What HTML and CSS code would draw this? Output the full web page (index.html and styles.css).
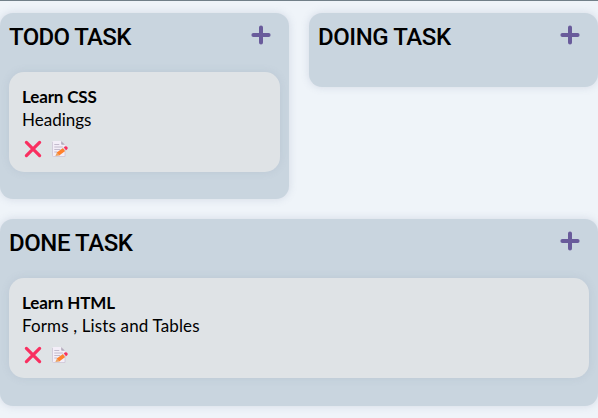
FILE: index.html
```html
<!DOCTYPE html>
<html lang="en">
<head>
<meta charset="utf-8">
<title>Task board</title>
<link rel="stylesheet" href="styles.css">
</head>
<body>
<svg class="defs" aria-hidden="true">
  <symbol id="plus" viewBox="0 0 20 20"><path d="M10 2.400v15.200M2.400 10h15.200" fill="none" stroke="#695b9b" stroke-width="4" stroke-linecap="round"/></symbol>
  <symbol id="cross" viewBox="0 0 18 18"><path d="M2.400 2.400l13.200 13.200M15.600 2.400L2.400 15.600" fill="none" stroke="#f92f60" stroke-width="3.200" stroke-linecap="round"/></symbol>
  <symbol id="memo" viewBox="0 0 18 18">
    <path d="M2.500 1h7.700L14 4.800V16.500H2.500a1 1 0 0 1-1-1V2a1 1 0 0 1 1-1z" fill="#f3eef8"/>
    <path d="M1.500 2v13.500a1 1 0 0 0 1 1H14V8" fill="none" stroke="#cdc4d6" stroke-width=".8"/>
    <path d="M10.200 1L14 4.800h-3a.8.8 0 0 1-.8-.8z" fill="#b4acbc"/>
    <path d="M3.300 4.500h5M3.300 7h8.500M3.300 9.500h6M3.300 12h3" stroke="#bdb4c7" stroke-width=".9"/>
    <path d="M4.300 15.900l1.700-3.500 2.400 3z" fill="#e6a567"/>
    <path d="M5.700 12.500l6.300-4.600 2.200 3-6 4.600z" fill="#ff822d"/>
    <path d="M12 7.900l1-.7 2.200 3-1 .7z" fill="#d3d3d3"/>
    <path d="M12.800 7.300l1-.7a1.800 1.800 0 0 1 2.200 2.900l-1 .8z" fill="#f92f60"/>
  </symbol>
</svg>
<main class="board">
  <section class="column">
    <header class="column-head"><h2 class="todo">TODO TASK</h2><svg class="add"><use href="#plus"/></svg></header>
    <article class="task">
      <h3>Learn CSS</h3>
      <p>Headings</p>
      <div class="actions"><svg><use href="#cross"/></svg><svg><use href="#memo"/></svg></div>
    </article>
  </section>
  <section class="column">
    <header class="column-head"><h2>DOING TASK</h2><svg class="add"><use href="#plus"/></svg></header>
  </section>
  <section class="column wide">
    <header class="column-head"><h2>DONE TASK</h2><svg class="add"><use href="#plus"/></svg></header>
    <article class="task">
      <h3>Learn HTML</h3>
      <p class="long">Forms , Lists and Tables</p>
      <div class="actions"><svg><use href="#cross"/></svg><svg><use href="#memo"/></svg></div>
    </article>
  </section>
</main>
</body>
</html>
```
FILE: styles.css
```css
* { box-sizing: border-box; margin: 0; }
body {
  height: 418px;
  overflow: hidden;
  background: #eff4f9;
  border-top: 1px solid #728089;
  color: #000;
  font-family: Lato, "Open Sans", sans-serif;
}
.defs { position: absolute; width: 0; height: 0; }
.board {
  display: grid;
  grid-template-columns: 1fr 1fr;
  grid-template-rows: 186px 187px;
  gap: 20px;
  align-items: start;
  padding-top: 12px;
}
.column {
  padding: 9px;
  border-radius: 13px;
  background: #c9d5df;
  box-shadow: 0 0 8px rgba(100, 115, 150, .2);
  height: 186px;
}
.column:nth-child(2) { height: 74px; }
.wide { grid-column: 1 / -1; height: 187px; }
.column-head {
  display: flex;
  justify-content: space-between;
  align-items: flex-start;
  height: 50px;
  padding: 3px 9px 0 0;
}
h2 {
  font: 500 24px/24px Roboto, sans-serif;
  letter-spacing: -.42px;
  white-space: nowrap;
}
.todo { letter-spacing: -.65px; }
.add { width: 20px; height: 20px; }
.task {
  height: 100px;
  padding: 12.500px 13px;
  border-radius: 15px;
  background: #dfe3e6;
  box-shadow: 0 0 8px rgba(100, 115, 150, .13);
}
h3, p { font-size: 17px; line-height: 23px; white-space: nowrap; }
h3 { font-weight: 700; letter-spacing: -.15px; }
.long { letter-spacing: .14px; }
.actions { display: flex; gap: 9.500px; padding: 9px 0 0 1.500px; }
.actions svg { width: 18px; height: 18px; }
```
